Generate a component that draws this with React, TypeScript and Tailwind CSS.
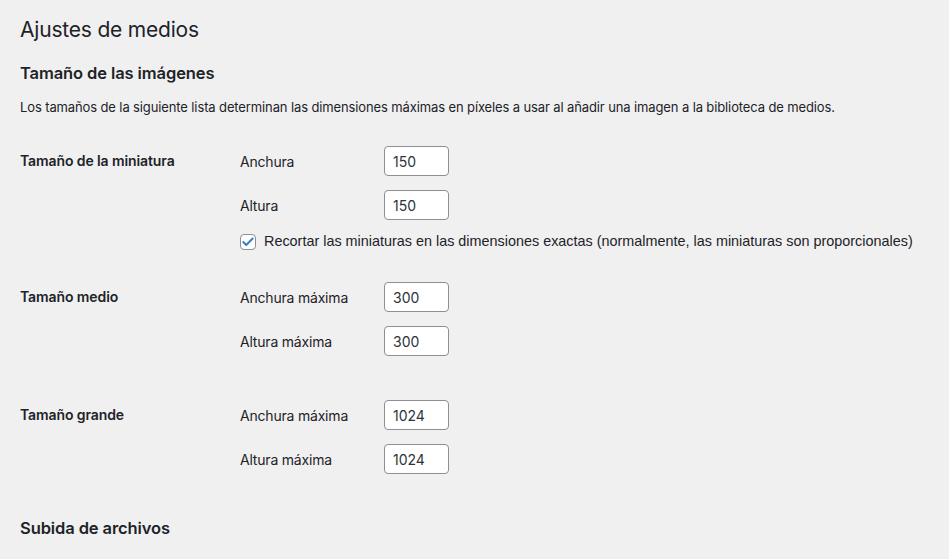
import { Check } from 'lucide-react';

const font = { fontFamily: 'Inter, "Noto Sans", sans-serif' };

function SizeInput({ value }: { value: string }) {
  return (
    <input
      type="text"
      defaultValue={value}
      className="h-[30px] w-[65px] rounded-[4px] border border-[#8c8f94] bg-white px-2 text-[14px] text-[#2c3338] outline-none"
    />
  );
}

function Field({ label, value }: { label: string; value: string }) {
  return (
    <div className="flex h-[30px] items-center">
      <label className="w-[144px] text-[14px] tracking-[-0.2px] text-[#1d2327]">{label}</label>
      <SizeInput value={value} />
    </div>
  );
}

function SizeRow({
  title,
  fields,
  children,
  className = '',
}: {
  title: string;
  fields: [string, string][];
  children?: React.ReactNode;
  className?: string;
}) {
  return (
    <div className={`flex ${className}`}>
      <div className="flex h-[28px] w-[220px] shrink-0 items-center text-[14px] font-semibold tracking-[-0.1px] text-[#1d2327]">
        {title}
      </div>
      <div className="flex flex-col gap-[14px]">
        {fields.map(([label, value]) => (
          <Field key={label} label={label} value={value} />
        ))}
        {children}
      </div>
    </div>
  );
}

export default function App() {
  return (
    <div
      className="min-h-screen bg-[#f0f0f1] px-5 pt-[16px] text-[#1d2327]"
      style={font}
    >
      <h1 className="text-[21px] font-normal leading-[27px] tracking-[-0.2px]">Ajustes de medios</h1>
      <h2 className="mt-[19px] text-[16.5px] font-semibold leading-[22px] tracking-[-0.1px]">
        Tamaño de las imágenes
      </h2>
      <p className="mt-[14px] text-[13px] leading-[18px] tracking-[-0.12px]">
        Los tamaños de la siguiente lista determinan las dimensiones máximas en píxeles a usar al añadir una imagen a la biblioteca de medios.
      </p>

      <SizeRow
        className="mt-[30px]"
        title="Tamaño de la miniatura"
        fields={[
          ['Anchura', '150'],
          ['Altura', '150'],
        ]}
      >
        <label
          className="flex h-[16px] items-center gap-2 whitespace-nowrap text-[14.4px]"
          style={{ fontFamily: '"Liberation Sans", Arial, sans-serif' }}
        >
          <span className="flex h-4 w-4 items-center justify-center rounded-[4px] border border-[#8c8f94] bg-white">
            <Check className="h-[14px] w-[14px] text-[#3582c4]" strokeWidth={3.5} />
          </span>
          Recortar las miniaturas en las dimensiones exactas (normalmente, las miniaturas son proporcionales)
        </label>
      </SizeRow>

      <SizeRow
        className="mt-[32px]"
        title="Tamaño medio"
        fields={[
          ['Anchura máxima', '300'],
          ['Altura máxima', '300'],
        ]}
      />

      <SizeRow
        className="mt-[44px]"
        title="Tamaño grande"
        fields={[
          ['Anchura máxima', '1024'],
          ['Altura máxima', '1024'],
        ]}
      />

      <h2 className="mt-[43px] text-[16.5px] font-semibold leading-[22px] tracking-[-0.1px]">
        Subida de archivos
      </h2>
    </div>
  );
}
